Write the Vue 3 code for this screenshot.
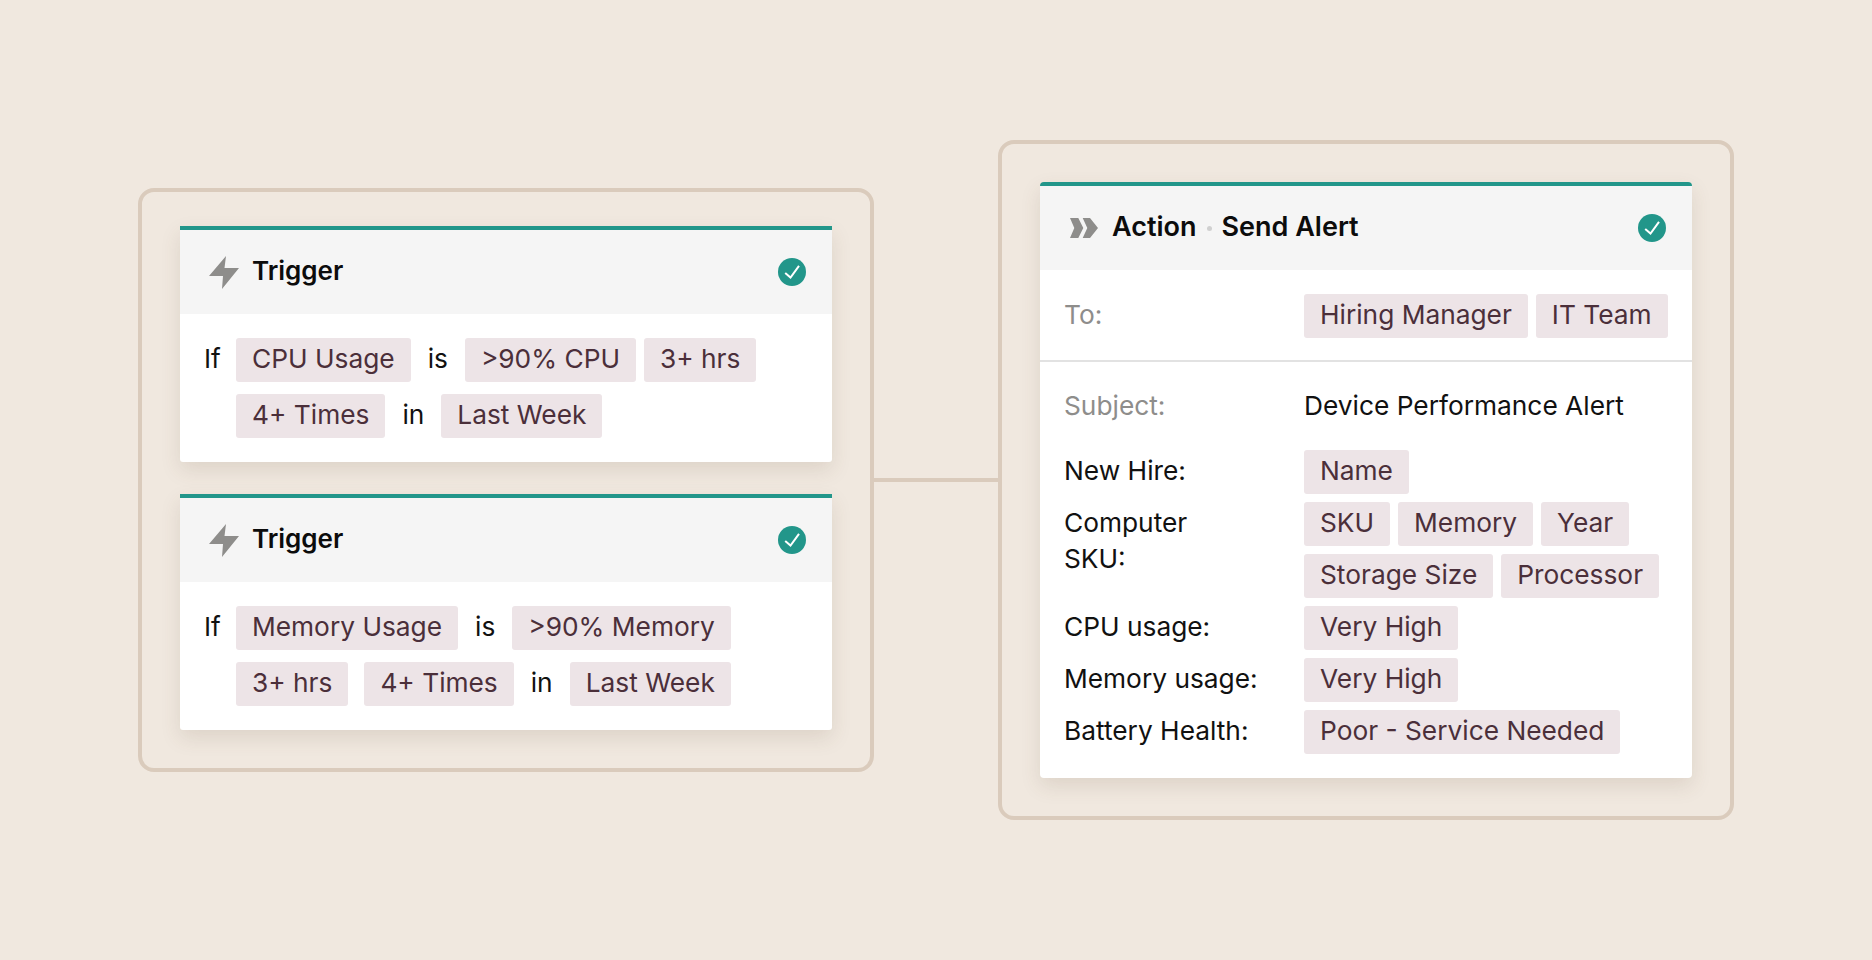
<script setup>
const triggers = [
  { rows: [
    [['t','CPU Usage'],['w','is'],['t','>90% CPU'],['t','3+ hrs']],
    [['t','4+ Times'],['w','in'],['t','Last Week']],
  ]},
  { rows: [
    [['t','Memory Usage'],['w','is'],['t','>90% Memory']],
    [['t','3+ hrs'],['g','4+ Times'],['w','in'],['t','Last Week']],
  ]},
]
const rows = [
  { label: 'New Hire:', tags: ['Name'] },
  { label: 'Computer\nSKU:', tags: ['SKU','Memory','Year','Storage Size','Processor'] },
  { label: 'CPU usage:', tags: ['Very High'] },
  { label: 'Memory usage:', tags: ['Very High'] },
  { label: 'Battery Health:', tags: ['Poor - Service Needed'] },
]
</script>

<template>
  <div class="page">
    <section class="frame frame-left">
      <article v-for="(t, i) in triggers" :key="i" class="card">
        <header class="head">
          <svg class="bolt" viewBox="0 0 30 33" width="30" height="33"><path d="M17 0 L0 20 L14 20 L13 33 L30 12 L15.5 12 Z" fill="#8e8d8b"/></svg>
          <span class="title">Trigger</span>
          <svg class="check" viewBox="0 0 28 28" width="28" height="28"><circle cx="14" cy="14" r="14" fill="#22968a"/><path d="M7.2 15 L12.5 19.5 L21 7.8" fill="none" stroke="#fff" stroke-width="2"/></svg>
        </header>
        <div class="body">
          <span class="if">If</span>
          <div class="lines">
            <div v-for="(r, j) in t.rows" :key="j" class="line">
              <template v-for="(p, k) in r" :key="k">
                <span v-if="p[0]==='w'" class="word">{{ p[1] }}</span>
                <span v-else class="tag" :class="{ spaced: p[0]==='g' }">{{ p[1] }}</span>
              </template>
            </div>
          </div>
        </div>
      </article>
    </section>
    <div class="link"></div>
    <section class="frame frame-right">
      <article class="card card-action">
        <header class="head head-action">
          <svg class="chev" viewBox="0 0 28 20" width="28" height="20"><path d="M0 0 H8.3 L13.3 10 L8.3 20 H0 L4.3 10 Z M12.7 0 H20 L28 10 L20 20 H12.7 L17.3 10 Z" fill="#8e8d8b"/></svg>
          <span class="title title-lg">Action</span><span class="dot"></span><span class="title title-lg">Send Alert</span>
          <svg class="check" viewBox="0 0 28 28" width="28" height="28"><circle cx="14" cy="14" r="14" fill="#22968a"/><path d="M7.2 15 L12.5 19.5 L21 7.8" fill="none" stroke="#fff" stroke-width="2"/></svg>
        </header>
        <div class="to">
          <span class="lab muted">To:</span>
          <div class="vals"><span class="tag">Hiring Manager</span><span class="tag">IT Team</span></div>
        </div>
        <div class="fields">
          <div class="subject"><span class="lab muted">Subject:</span><span class="subj">Device Performance Alert</span></div>
          <div v-for="r in rows" :key="r.label" class="field">
            <span class="lab">{{ r.label }}</span>
            <div class="vals"><span v-for="x in r.tags" :key="x" class="tag">{{ x }}</span></div>
          </div>
        </div>
      </article>
    </section>
  </div>
</template>

<style>
body { margin: 0; background: #f0e8df; }
</style>
<style scoped>
.page { width: 1872px; height: 960px; display: flex; align-items: center; justify-content: center; background: #f0e8df; font-family: Inter, "Liberation Sans", sans-serif; font-size: 26.3px; color: #111; }
.frame { box-sizing: border-box; width: 736px; border: 4px solid #dacbbc; border-radius: 16px; padding: 38px; display: flex; flex-direction: column; gap: 32px; }
.frame-left { padding-top: 34px; }
.link { width: 124px; height: 4px; background: #dacbbc; }
.card { background: #fff; border-top: 4px solid #22968a; border-radius: 0 0 3px 3px; box-shadow: 0 8px 20px rgba(90,70,50,.13); overflow: hidden; }
.card-action { border-radius: 4px; }
.head { height: 84px; background: #f5f5f5; display: flex; align-items: center; padding: 0 26px 0 29px; }
.head-action { padding-left: 30px; }
.bolt { margin-right: 13px; }
.chev { margin-right: 14px; }
.title { font-weight: 600; font-size: 26px; color: #0c0c0c; padding-bottom: 3px; }
.title-lg { font-size: 27px; }
.check { margin-left: auto; }
.dot { width: 5px; height: 5px; border-radius: 50%; background: #d0d0d0; margin: 0 10px; }
.body { display: flex; padding: 24px; }
.if { width: 32px; line-height: 41px; }
.lines { display: flex; flex-direction: column; gap: 12px; }
.line { display: flex; gap: 8px; }
.tag { height: 44px; line-height: 41px; box-sizing: border-box; padding: 0 16px 3px; background: #ede4e7; border-radius: 3px; color: #4b2f3a; white-space: nowrap; }
.spaced { margin-left: 8px; }
.word { line-height: 41px; margin: 0 9px; }
.to { display: flex; align-items: center; padding: 24px 10px 22px 24px; border-bottom: 2px solid #e2e2e2; }
.to .lab { padding-bottom: 2px; }
.lab { width: 240px; flex: none; line-height: 36px; white-space: pre-line; box-sizing: border-box; }
.muted { color: #8e8d8b; }
.vals { display: flex; flex-wrap: wrap; gap: 8px; }
.fields { padding: 24px 10px 24px 24px; display: flex; flex-direction: column; gap: 8px; }
.subject { display: flex; align-items: center; height: 40px; margin-bottom: 16px; }
.field { display: flex; }
.field .lab { padding-top: 3px; }
.subj { padding-bottom: 2px; white-space: nowrap; }
</style>
